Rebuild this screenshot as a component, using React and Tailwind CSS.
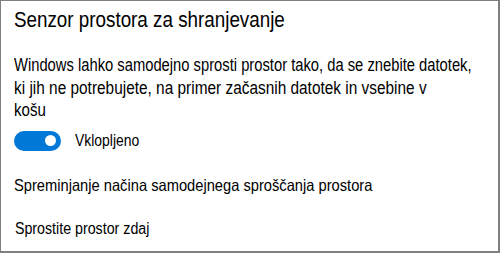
export default function App() {
  return (
    <div
      className="w-[500px] h-[253px] bg-white border-t border-l border-r-2 border-b-2 border-[#7f7f7f] box-border overflow-hidden text-black"
      style={{ fontFamily: '"Liberation Sans", Arial, sans-serif' }}
    >
      <div className="pl-[13px] pt-[5px] flex flex-col">
        <div className="whitespace-nowrap origin-left scale-x-[0.855] text-[22px] leading-[28px]">
          Senzor prostora za shranjevanje
        </div>
        <p className="mt-[20px] flex flex-col whitespace-nowrap text-[17.5px] leading-[22.5px]">
          <span className="origin-left scale-x-[0.843]">
            Windows lahko samodejno sprosti prostor tako, da se znebite datotek,
          </span>
          <span className="origin-left scale-x-[0.88]">
            ki jih ne potrebujete, na primer začasnih datotek in vsebine v
          </span>
          <span className="origin-left scale-x-[0.86]">košu</span>
        </p>
        <div className="mt-[8px] flex items-center gap-[14px]">
          <div className="w-[47px] h-[20px] rounded-full bg-[#0078d7] flex items-center justify-end pr-[5px]">
            <div className="w-[11px] h-[11px] rounded-full bg-white"></div>
          </div>
          <span className="inline-block whitespace-nowrap origin-left scale-x-[0.87] text-[16px] leading-[22px]">
            Vklopljeno
          </span>
        </div>
        <div className="mt-[22px] whitespace-nowrap origin-left scale-x-[0.89] text-[16.5px] leading-[22px]">
          Spreminjanje načina samodejnega sproščanja prostora
        </div>
        <div className="mt-[23px] pl-[1px] whitespace-nowrap origin-left scale-x-[0.89] text-[16px] leading-[20px]">
          Sprostite prostor zdaj
        </div>
      </div>
    </div>
  );
}
